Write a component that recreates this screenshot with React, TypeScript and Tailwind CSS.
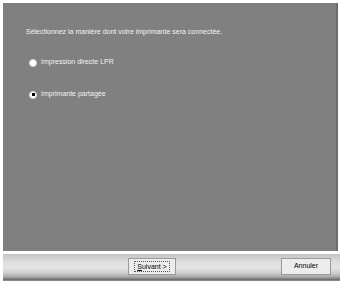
export default function App() {
  return (
    <div className="w-[340px] h-[282px] bg-white flex flex-col pt-[3px] pl-[3px] font-['Liberation_Sans',Arial,sans-serif] text-[7px] text-[#f2f2f2] overflow-hidden">
      {/* Content panel */}
      <div className="w-[335px] h-[248px] bg-[#808080] border-r-2 border-[#6c6c6c] pl-[23px] pt-[24px] flex flex-col">
        <p className="leading-[9px]">Sélectionnez la manière dont votre imprimante sera connectée.</p>
        <div className="mt-[22px] h-[9px] flex items-center gap-[4px] pl-[3px]">
          <span className="w-[8px] h-[8px] rounded-full bg-white border border-[#d8d8d8]" />
          <span>Impression directe LPR</span>
        </div>
        <div className="mt-[23px] h-[9px] flex items-center gap-[4px] pl-[3px]">
          <span className="w-[8px] h-[8px] rounded-full bg-white border border-[#d8d8d8] flex items-center justify-center">
            <span className="w-[3px] h-[3px] bg-black" />
          </span>
          <span>Imprimante partagée</span>
        </div>
      </div>
      {/* Button bar */}
      <div className="mt-[3px] w-[337px] h-[27px] bg-[linear-gradient(to_bottom,#c4c4c4_0%,#dedede_30%,#e4e4e4_50%,#cfcfcf_70%,#a8a8a8_85%,#6e6e6e_95%,#9a9a9a_100%)] flex items-center text-black pb-[2px]">
        <div className="ml-[125px] w-[48px] h-[17px] border border-[#9a9a9a] bg-[#ececec] flex items-center justify-center">
          <span className="px-[2px] border border-dotted border-[#555] leading-[9px]">
            <span className="underline">S</span>uivant &gt;
          </span>
        </div>
        <div className="ml-auto mr-[9px] w-[50px] h-[17px] border border-[#9a9a9a] bg-[#ececec] flex items-center justify-center">
          Annuler
        </div>
      </div>
    </div>
  );
}
